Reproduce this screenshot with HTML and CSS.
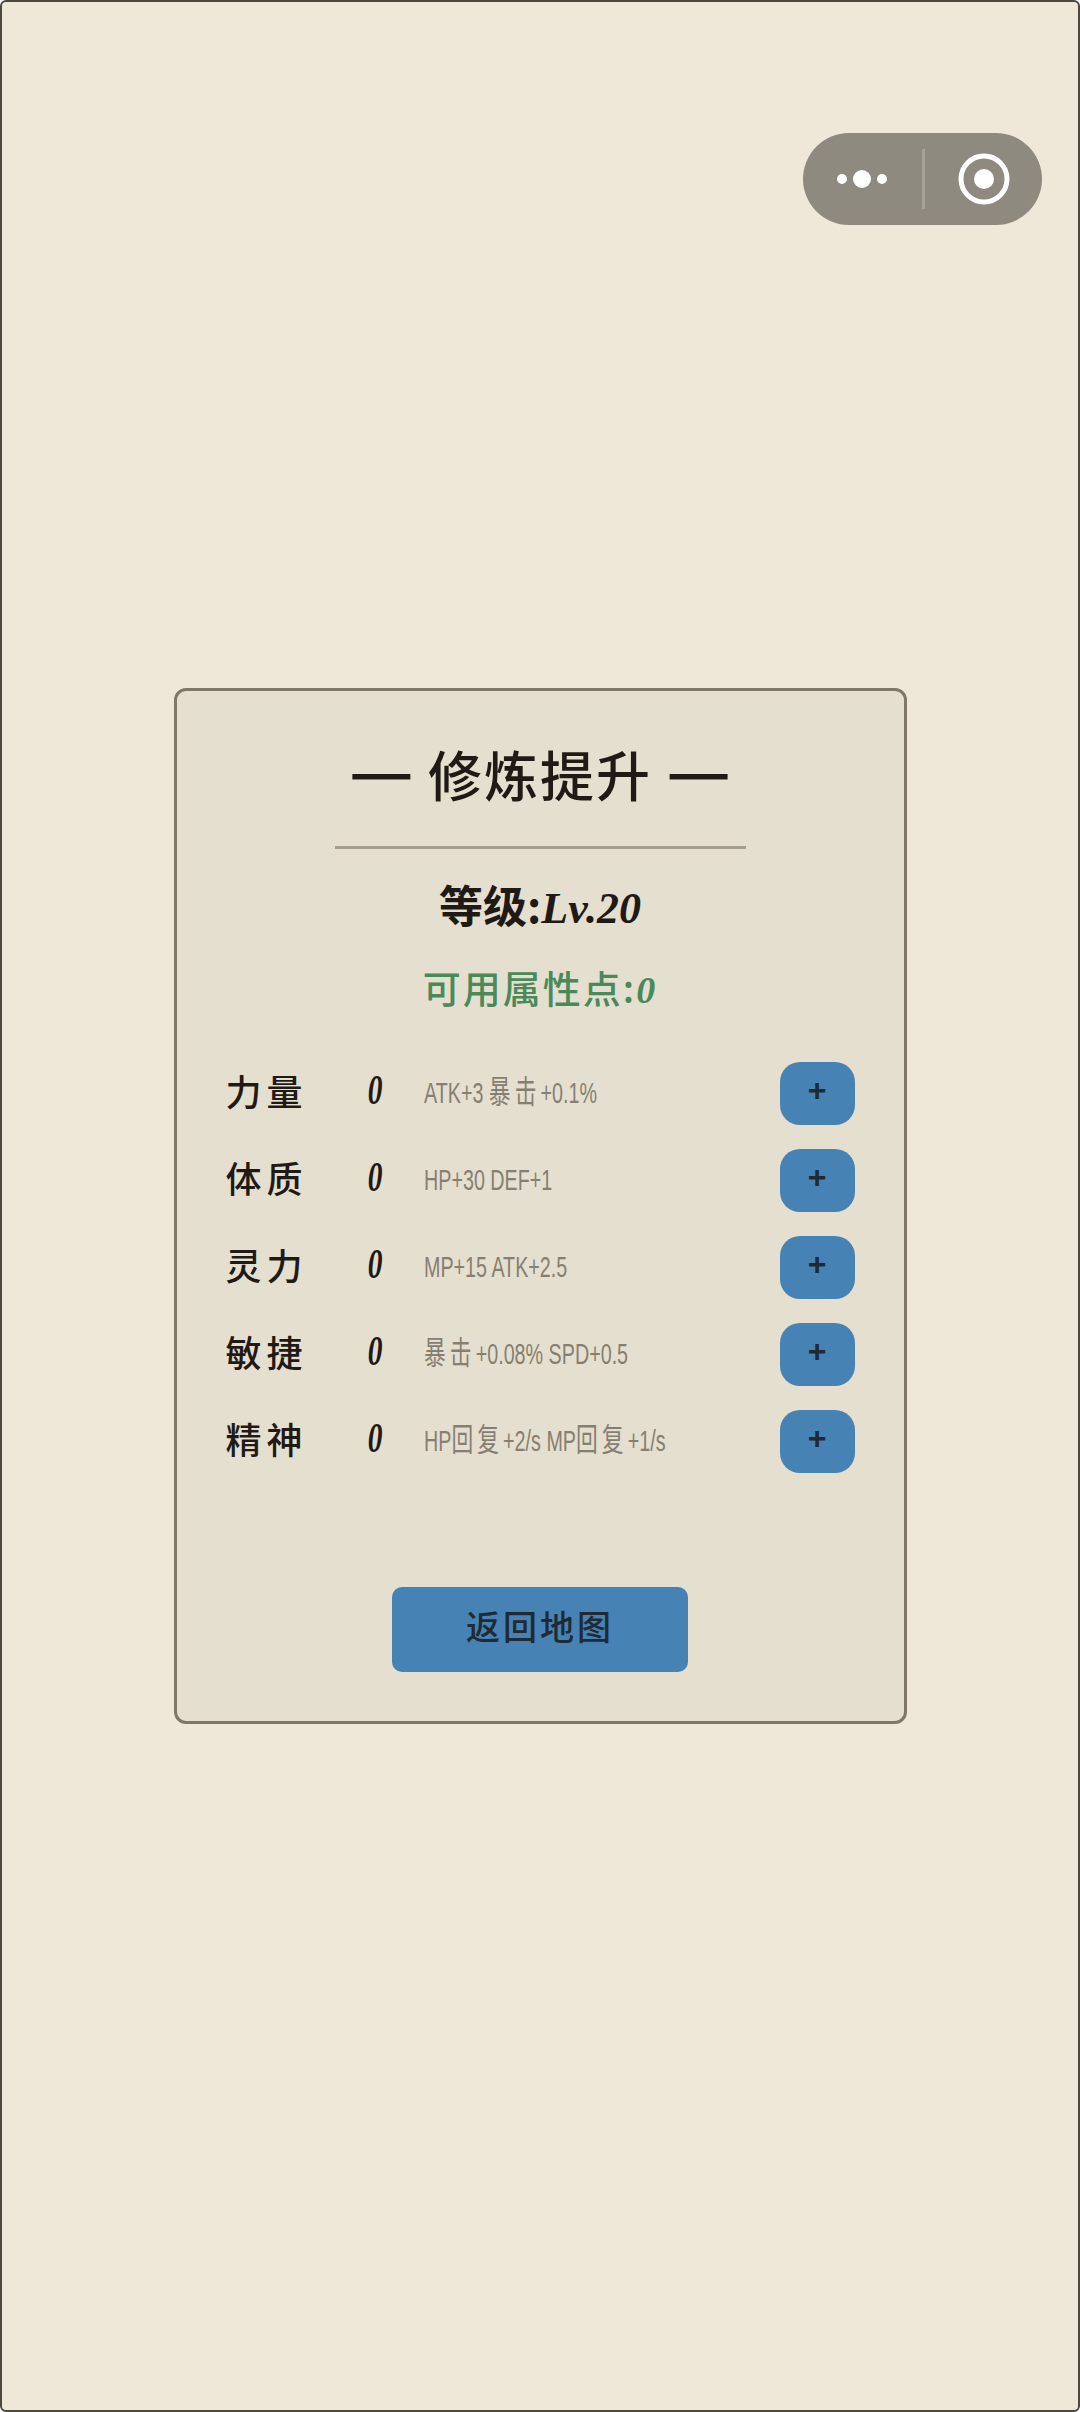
FILE: index.html
```html
<!DOCTYPE html>
<html lang="en">
<head>

    <meta charset="utf-8">

    <title>修炼提升</title>

    <link rel="stylesheet" href="styles.css">

</head>
<body>

    <div class="screen">

        <div class="capsule">
            <svg class="capsule-more" width="60" height="20" viewBox="0 0 60 20">
                <circle cx="11" cy="10" r="5" fill="#fff"/>
                <circle cx="31" cy="10" r="9" fill="#fff"/>
                <circle cx="51" cy="10" r="5" fill="#fff"/>
            </svg>
            <div class="capsule-line"></div>
            <svg class="capsule-close" width="52" height="52" viewBox="0 0 52 52">
                <circle cx="26" cy="26" r="23" fill="none" stroke="#fff" stroke-width="5"/>
                <circle cx="26" cy="26" r="10" fill="#fff"/>
            </svg>
        </div>

        <div class="card">

            <div class="title"><span class="dash">—</span> 修炼提升 <span class="dash">—</span></div>
            <div class="divider"></div>

            <div class="level">等级:<span class="latin">Lv.20</span></div>
            <div class="points">可用属性点:<span class="latin">0</span></div>

            <div class="stats">
                <div class="stat">
                    <div class="stat-name">力量</div>
                    <div class="stat-value">0</div>
                    <div class="stat-desc">ATK+3 <span class="cn">暴击</span>+0.1%</div>
                    <div class="stat-add">+</div>
                </div>
                <div class="stat">
                    <div class="stat-name">体质</div>
                    <div class="stat-value">0</div>
                    <div class="stat-desc">HP+30 DEF+1</div>
                    <div class="stat-add">+</div>
                </div>
                <div class="stat">
                    <div class="stat-name">灵力</div>
                    <div class="stat-value">0</div>
                    <div class="stat-desc">MP+15 ATK+2.5</div>
                    <div class="stat-add">+</div>
                </div>
                <div class="stat">
                    <div class="stat-name">敏捷</div>
                    <div class="stat-value">0</div>
                    <div class="stat-desc"><span class="cn">暴击</span>+0.08% SPD+0.5</div>
                    <div class="stat-add">+</div>
                </div>
                <div class="stat">
                    <div class="stat-name">精神</div>
                    <div class="stat-value">0</div>
                    <div class="stat-desc">HP<span class="cn">回复</span>+2/s MP<span class="cn">回复</span>+1/s</div>
                    <div class="stat-add">+</div>
                </div>
            </div>

            <div class="back">返回地图</div>

        </div>

    </div>

</body>
</html>
```

FILE: styles.css
```css
html, body {
    width: 100%;
    height: 100%;
    margin: 0;
}
body {
    font-family: "Noto Sans CJK SC", "Noto Sans", sans-serif;
    color: #1f1a15;
}
.screen {
    display: flex;
    position: relative;
    box-sizing: border-box;
    align-items: center;
    justify-content: center;
    width: 1080px;
    height: 2412px;
    background: #efe8d9;
    border: 2px solid #4f483f;
    border-radius: 6px;
}
/* wechat capsule sits over the page */
.capsule {
    display: flex;
    position: absolute;
    top: 131px;
    right: 36px;
    box-sizing: border-box;
    align-items: center;
    width: 239px;
    height: 92px;
    background: #8e8a7f;
    border-radius: 46px;
}
.capsule-more {
    margin-left: 28px;
}
.capsule-line {
    width: 3px;
    height: 60px;
    margin-left: 31px;
    background: #a6a296;
}
.capsule-close {
    margin-left: 33px;
}
.card {
    box-sizing: border-box;
    width: 733px;
    margin-top: -1px;
    padding: 52px 49px 49px;
    background: #e5dfcf;
    border: 3px solid #7f7868;
    border-radius: 12px;
}
.title {
    height: 70px;
    font-size: 54px;
    font-weight: 500;
    line-height: 62px;
    letter-spacing: 2px;
    text-align: center;
    white-space: nowrap;
}
.dash {
    font-size: 72px;
    line-height: 0;
    letter-spacing: 0;
}
.divider {
    width: 411px;
    height: 3px;
    margin: 33px auto 0;
    background: #a49d8b;
}
.level {
    height: 60px;
    margin-top: 28px;
    font-size: 44px;
    font-weight: 700;
    line-height: 54px;
    text-align: center;
}
.points {
    height: 50px;
    margin-top: 28px;
    font-size: 38px;
    font-weight: 500;
    line-height: 44px;
    letter-spacing: 2px;
    text-align: center;
    color: #4a8a5a;
}
.latin {
    font-family: "Liberation Serif", serif;
    font-style: italic;
    font-weight: 700;
    line-height: 0;
}
.stats {
    display: flex;
    flex-direction: column;
    gap: 24px;
    margin-top: 47px;
}
.stat {
    display: grid;
    grid-template-columns: 120px 58px minmax(0, 1fr) 75px;
    align-items: center;
    height: 63px;
}
.stat-name {
    padding-bottom: 6px;
    font-size: 36px;
    font-weight: 500;
    letter-spacing: 5px;
    white-space: nowrap;
}
.stat-value {
    padding-bottom: 6px;
    font-family: "Liberation Serif", serif;
    font-size: 42px;
    font-style: italic;
    font-weight: 700;
    text-align: center;
    transform: scaleX(0.7);
}
.stat-desc {
    margin-left: 20px;
    font-family: "Liberation Sans", "Noto Sans CJK SC", sans-serif;
    font-size: 29px;
    line-height: 40px;
    color: #857f72;
    white-space: nowrap;
    transform: scaleX(0.68);
    transform-origin: left center;
}
.cn {
    font-family: "Noto Sans CJK SC", sans-serif;
    font-size: 32px;
    line-height: 0;
    letter-spacing: 6px;
}
.stat-add {
    height: 63px;
    background: #4682b4;
    border-radius: 20px;
    font-family: "Liberation Sans", sans-serif;
    font-size: 32px;
    font-weight: 700;
    line-height: 56px;
    text-align: center;
    color: #1f2a33;
}
.back {
    width: 296px;
    height: 85px;
    margin: 114px auto 0;
    background: #4682b4;
    border-radius: 10px;
    font-size: 34px;
    font-weight: 500;
    line-height: 78px;
    letter-spacing: 3px;
    text-align: center;
    color: #1f2a33;
}
```
